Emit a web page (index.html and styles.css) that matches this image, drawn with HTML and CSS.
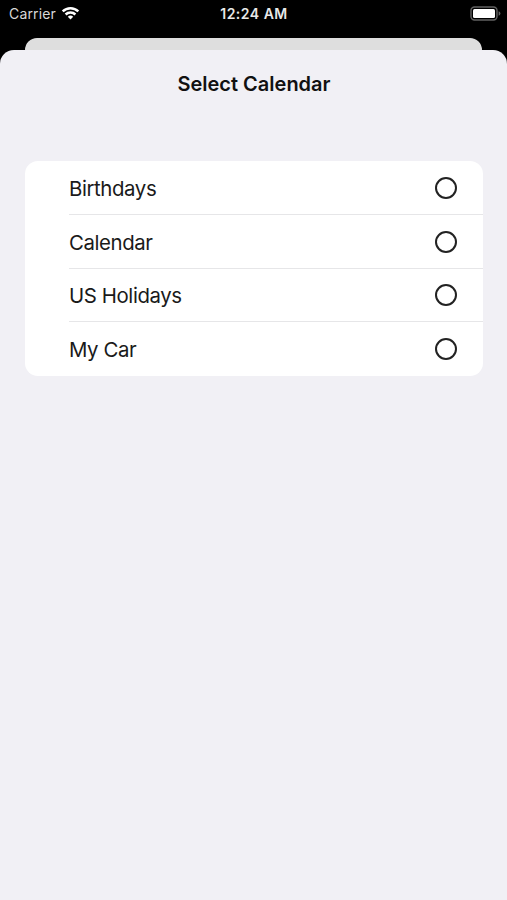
FILE: index.html
```html
<!DOCTYPE html>
<html lang="en">

    <head>
        <meta charset="utf-8">
        <title>Select Calendar</title>
        <link rel="stylesheet" href="styles.css">
    </head>

    <body>
        <div class="status_bar">
            <div class="status_left">
                <span class="carrier">Carrier</span>
                <svg class="wifi" viewBox="0 0 18 14">
                    <path d="M1.2 5.4a11.2 11.2 0 0 1 15.6 0" />
                    <path d="M4.1 8.5a7 7 0 0 1 9.8 0" />
                    <path class="wifi_dot" d="M9 13.6l-2.7-2.8a3.9 3.9 0 0 1 5.4 0z" />
                </svg>
            </div>
            <span class="time">12:24 AM</span>
            <div class="status_right">
                <svg class="battery" viewBox="0 0 31 15">
                    <rect class="battery_case" x="1" y="1" width="26" height="13" rx="3.5" />
                    <rect class="battery_level" x="3" y="3" width="22" height="9" rx="1.5" />
                    <path class="battery_tip" d="M28.6 5.2q1.8.6 1.8 2.3t-1.8 2.3z" />
                </svg>
            </div>
        </div>
        <div class="back_sheet"></div>
        <div class="sheet">
            <h1 class="title">Select Calendar</h1>
            <ul class="calendar_list">
                <li class="calendar_row">
                    <span class="name">Birthdays</span>
                    <span class="radio"></span>
                </li>
                <li class="calendar_row">
                    <span class="name">Calendar</span>
                    <span class="radio"></span>
                </li>
                <li class="calendar_row">
                    <span class="name">US Holidays</span>
                    <span class="radio"></span>
                </li>
                <li class="calendar_row">
                    <span class="name">My Car</span>
                    <span class="radio"></span>
                </li>
            </ul>
        </div>
    </body>

</html>
```

FILE: styles.css
```css
* {
    margin: 0;
    padding: 0;
    box-sizing: border-box;
}

body {
    display: flex;
    flex-direction: column;
    height: 100vh;
    background: #000;
    font-family: Inter, "Liberation Sans", sans-serif;
    overflow: hidden;
}

.status_bar {
    display: grid;
    grid-template-columns: 1fr auto 1fr;
    align-items: center;
    height: 27px;
    padding: 0 6px 0 9px;
    color: #e8e8e8;
    font-size: 14px;
}

.status_left {
    display: flex;
    align-items: center;
    gap: 5px;
}

.carrier {
    letter-spacing: 0.15px;
    color: #d8d8d8;
}

.wifi {
    width: 19px;
    height: 14px;
    margin-top: -1px;
    fill: none;
    stroke: #fff;
    stroke-width: 2.5;
}

.wifi .wifi_dot {
    fill: #fff;
    stroke: none;
}

.time {
    margin-right: 2px;
    font-weight: 600;
    letter-spacing: 0.5px;
}

.status_right {
    display: flex;
    justify-content: flex-end;
}

.battery {
    width: 31px;
    height: 15px;
}

.battery_case {
    fill: none;
    stroke: #626262;
    stroke-width: 1.4;
}

.battery_level {
    fill: #fff;
}

.battery_tip {
    fill: #626262;
}

.back_sheet {
    height: 12px;
    margin: 11px 25px 0;
    border-radius: 12px 12px 0 0;
    background: #dedede;
}

.sheet {
    flex: 1;
    padding: 0 24px 0 25px;
    border-radius: 14px 14px 0 0;
    background: #f1f0f5;
}

.title {
    height: 111px;
    padding-top: 20px;
    color: #111;
    font-size: 20px;
    font-weight: 600;
    line-height: 28px;
    text-align: center;
}

.calendar_list {
    border-radius: 13px;
    background: #fff;
    list-style: none;
}

.calendar_row {
    display: flex;
    align-items: center;
    height: 53.75px;
    padding-left: 44px;
}

.calendar_row .name {
    padding-top: 1px;
    color: #1a1a1a;
    font-size: 20.4px;
    letter-spacing: -0.4px;
}

.calendar_row .radio {
    width: 22px;
    height: 22px;
    margin: 0 26px 0 auto;
    border: 2px solid #222;
    border-radius: 50%;
}

.calendar_row:not(:last-child) {
    background: linear-gradient(#e6e6e8, #e6e6e8) 44px 100% / 100% 1px no-repeat;
}
```
